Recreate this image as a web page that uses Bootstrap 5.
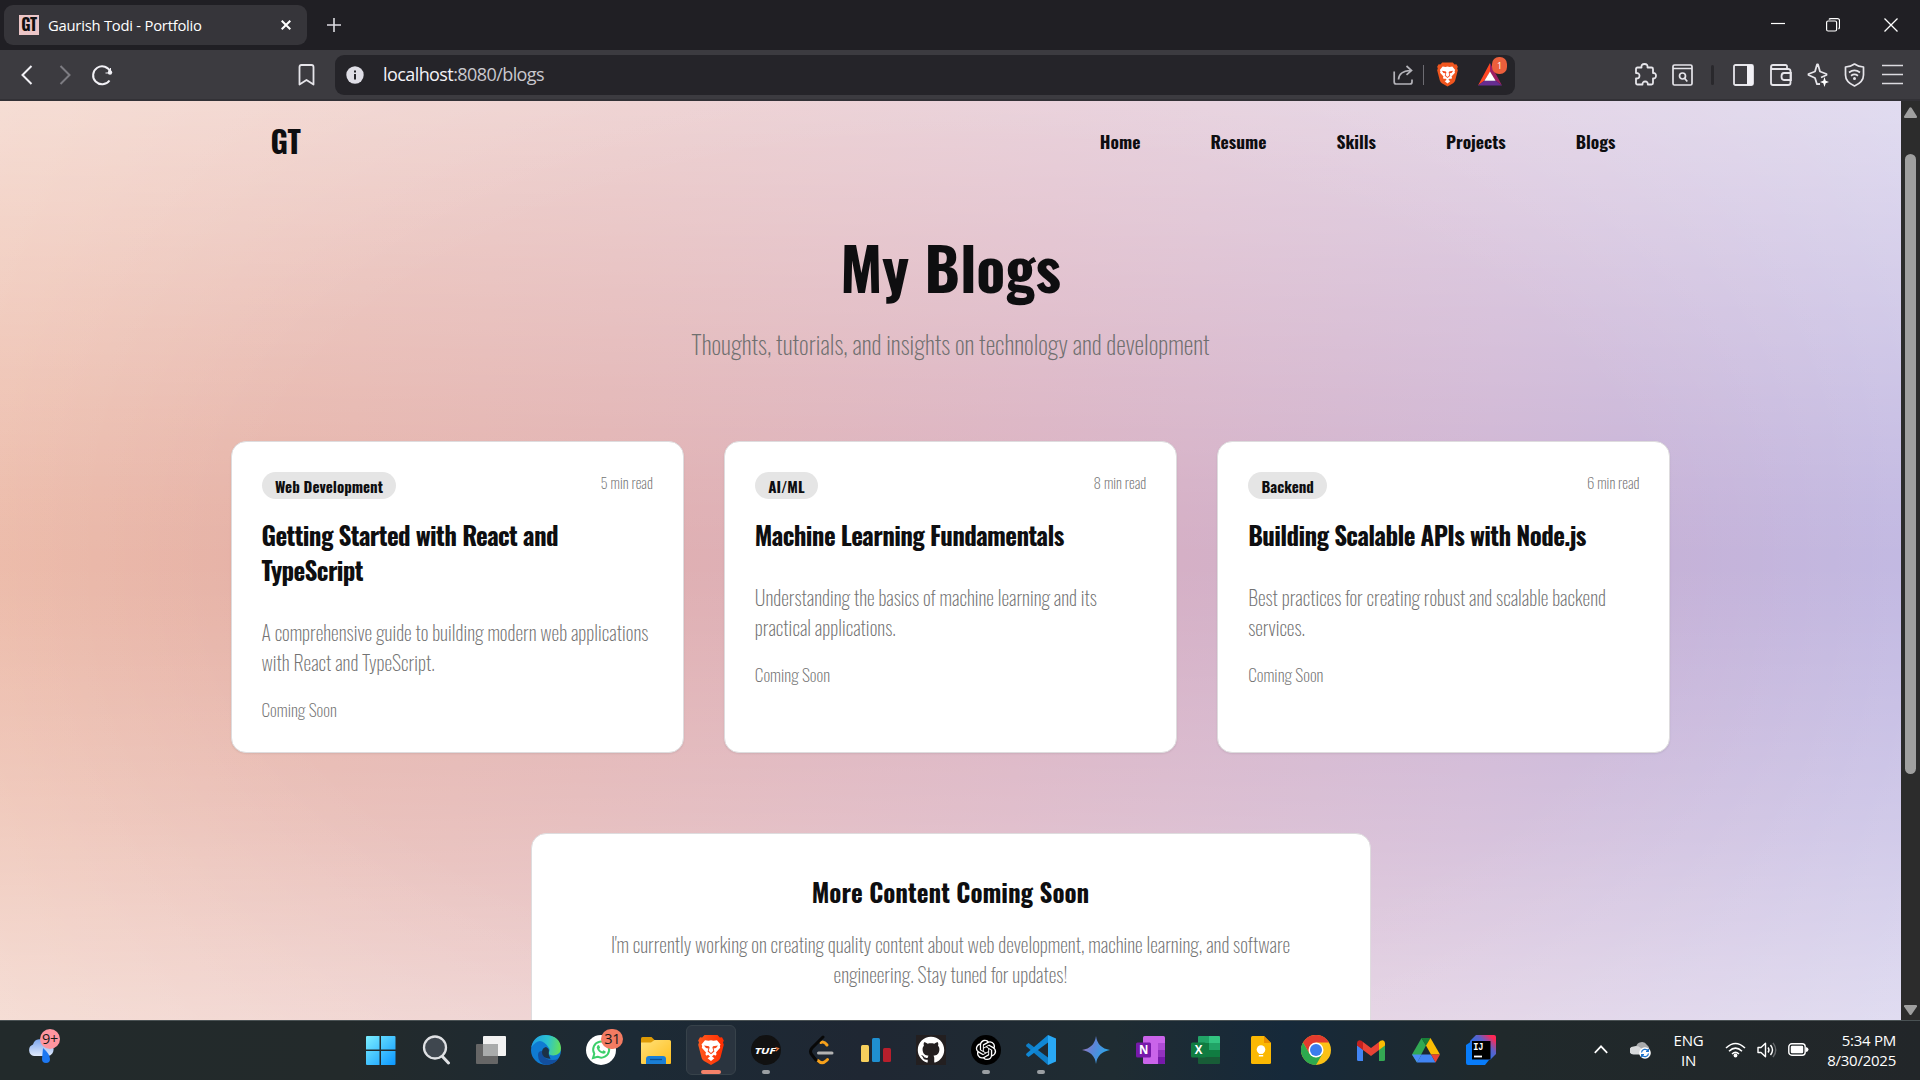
<!DOCTYPE html>
<html lang="en">
<head>
<meta charset="utf-8">
<title>Gaurish Todi - Portfolio</title>
<meta name="viewport" content="width=device-width, initial-scale=1">
<link href="https://cdn.jsdelivr.net/npm/bootstrap@5.3.0/dist/css/bootstrap.min.css" rel="stylesheet">
<style>
  html, body { height: 100%; }
  body { width: 1920px; height: 1080px; overflow: hidden; font-family: "Open Sans", "Noto Sans", sans-serif; background: #201f24; color: #fff; }
  svg { display: block; flex: none; }
  .cell { display: flex; align-items: center; justify-content: center; flex: none; }
  .w23 { width: 23px; } .w24 { width: 24px; } .w36 { width: 36px; } .w37 { width: 37px; } .w38 { width: 38px; } .w40 { width: 40px; } .w53 { width: 53px; } .w56 { width: 56px; } .w58 { width: 58px; }

  /* browser window */
  .tabstrip { height: 50px; background: #201f24; }
  .tab-item { width: 303px; height: 40px; margin: 5px 0 0 4px; padding: 0 12px 0 15px; border-radius: 9px; background: #36353a; font-size: 14.8px; letter-spacing: -.24px; }
  .tab-title { margin-left: 9px; }
  .favicon { width: 20px; height: 20px; background: #ecc6c8; color: #111; font: 700 16px/19px Oswald, "Roboto Condensed", sans-serif; text-align: center; }
  .toolbar { height: 51px; background: #3c3b40; border-bottom: 2px solid #323136; padding: 0 9px 0 8px; }
  .bookmark-cell { margin-left: 168px; }
  .address { width: 1180px; height: 40px; margin-left: 11px; border-radius: 9px; background: #252429; font-size: 18px; letter-spacing: -.58px; color: #c9c8ce; padding-right: 5px; }
  .address b { font-weight: 400; color: #f3f2f7; }
  .vline { width: 1px; height: 20px; background: #6d6c72; }
  .vline-dark { width: 3px; height: 20px; border-radius: 2px; background: #29282c; }
  .bat-badge { position: absolute; left: 22px; top: -6px; width: 15px; height: 17px; border-radius: 7px; background: #ec5f3c; font-size: 9px; line-height: 17px; text-align: center; color: #fff; letter-spacing: 0; }

  /* page viewport */
  .viewport { height: 919px; }
  .page { width: 1901px; height: 919px; overflow: hidden; color: #0e0e10; font-family: Oswald, "Roboto Condensed", sans-serif;
    background:
      radial-gradient(ellipse 62% 75% at 50% 50%, rgba(255,255,255,0) 60%, rgba(255,255,255,.28) 120%),
      linear-gradient(180deg, rgba(255,255,255,.43), rgba(255,255,255,.23) 22%, rgba(255,255,255,.03) 44%, rgba(255,255,255,0) 50%, rgba(255,255,255,.03) 56%, rgba(255,255,255,.2) 78%, rgba(255,255,255,.43)),
      linear-gradient(94deg, #ebb5a1 0%, #e1b0b0 32%, #d9afc0 54%, #cdb2d2 77%, #bbb2e0 100%); }
  .page > * { flex: none; }
  .site-nav { height: 80px; width: 1360px; padding-right: 15px; }
  .logo { font-size: 30px; font-weight: 700; line-height: 40px; }
  .menu { gap: 70px; font-size: 17.5px; font-weight: 700; line-height: 25px; }
  .hero-title { margin: 55px 0 0; font-size: 60px; font-weight: 700; line-height: 59px; }
  .hero-sub { margin: 31px 0 0; font-size: 25px; font-weight: 200; line-height: 35px; color: #6f6f6f; }
  .posts { width: 1440px; gap: 40px; margin-top: 80px; }
  .post { flex: 1 1 0; min-width: 0; border: 1px solid #dedcde; border-radius: 15px; background: #fff; padding: 30px; box-shadow: 0 1px 2px rgba(0,0,0,.08); color: #0e0e10; height: 312px; }
  .tag { background: #e5e5e5; border-radius: 14px; height: 27px; padding: 0 13.4px; font-size: 15px; font-weight: 700; line-height: 28px; }
  .read { font-size: 15px; font-weight: 200; line-height: 21px; color: #737373; }
  .post h2, .more h2 { font-size: 25px; line-height: 35px; font-weight: 700; margin: 18px 0 0; }
  .post h2 { letter-spacing: -.625px; }
  .post p, .more p { font-size: 20px; font-weight: 200; line-height: 30px; color: #737373; margin: 30px 0 0; }
  .post .soon { font-size: 17.5px; line-height: 25px; margin-top: 20px; }
  .more { width: 840px; height: 300px; margin-top: 80px; border: 1px solid #dedcde; border-radius: 15px; background: #fff; padding: 40px 60px; }
  .more h2 { margin: 0; } .more p { margin-top: 20px; }
  .scroller { width: 19px; height: 919px; background: #2c2c2c; padding: 6px 0 5px; }
  .thumb { width: 11px; height: 620px; margin-top: 36px; border-radius: 6px; background: #9f9f9f; }

  /* taskbar */
  .taskbar { height: 60px; border-top: 1px solid #4a5254; background: linear-gradient(90deg, #222a2b 0, #232a2b 18%, #1c2a35 33%, #1f2733 45%, #1f2c32 58%, #16293a 67%, #20292b 78%, #222629 100%); font-size: 15px; line-height: 20px; letter-spacing: -.25px; }
  .pinned { margin-left: 271px; }
  .tray { padding: 0 24px 2px 0; }
  .clock { width: 77.5px; white-space: nowrap; }
  .task { width: 55.05px; height: 59px; padding-bottom: 1px; display: flex; align-items: center; justify-content: center; position: relative; flex: none; }
  .task.open::after { content: ""; position: absolute; left: 23.5px; bottom: 6px; width: 8px; height: 4px; border-radius: 2px; background: #9a9fa3; }
  .task.active::before { content: ""; position: absolute; left: 2.5px; top: 4px; width: 50px; height: 50px; border: 1px solid #37424a; border-radius: 6px; background: #2a343f; }
  .task.active::after { left: 17.5px; width: 20px; background: #f4826a; }
  .task svg { position: relative; }
  .notif { position: absolute; height: 20px; border-radius: 10px; color: #1a1a1a; font-size: 14.5px; line-height: 20px; text-align: center; }
  .task.weather { width: 82px; }
  .weather .notif { left: 40px; top: 8px; width: 20px; background: #ff95a0; }
  .notif.wa { left: 28px; top: 8px; width: 22px; background: #f37b62; }
</style>
</head>
<body>
<svg width="0" height="0" class="position-absolute">
  <defs>
    <linearGradient id="gWin" x1="0" y1="0" x2="1" y2="1"><stop offset="0" stop-color="#7cefff"/><stop offset="1" stop-color="#0b97ff"/></linearGradient>
    <linearGradient id="gEdgeA" x1="0" y1=".3" x2="1" y2=".4"><stop offset="0" stop-color="#1f9fe4"/><stop offset=".55" stop-color="#2cc3cf"/><stop offset="1" stop-color="#63e05a"/></linearGradient>
    <linearGradient id="gFold" x1="0" y1="0" x2="1" y2="1"><stop offset="0" stop-color="#ffe17a"/><stop offset="1" stop-color="#ffbe1c"/></linearGradient>
    <linearGradient id="gGem" x1="0" y1="0" x2="1" y2=".4"><stop offset="0" stop-color="#b070b0"/><stop offset=".5" stop-color="#5a86d8"/><stop offset="1" stop-color="#2aa6e8"/></linearGradient>
    <linearGradient id="gIj" x1=".2" y1=".8" x2="1" y2="0"><stop offset="0" stop-color="#087cfa"/><stop offset=".55" stop-color="#5f60c8"/><stop offset=".85" stop-color="#fe2857"/></linearGradient>
    <linearGradient id="gCloud" x1="0" y1="0" x2="0" y2="1"><stop offset="0" stop-color="#7fa8ee"/><stop offset="1" stop-color="#dfe9fb"/></linearGradient>
    <linearGradient id="gBrave" x1="0" y1="0" x2="1" y2="0"><stop offset="0" stop-color="#ff5a1f"/><stop offset="1" stop-color="#ff2c00"/></linearGradient>
    <symbol id="lion" viewBox="0 0 26 30">
      <path d="M6.500 0h13l2.300 2.600 2.200-.3 1.800 3.200-.8 2 .8 2.300-3.300 12.600c-.4 1.500-1.300 2.600-2.500 3.500L13 30l-7-4.100c-1.200-.9-2.100-2-2.500-3.500L.2 9.800 1 7.500l-.8-2L2 2.300l2.200.3z"/>
      <path fill="#fff" d="M13 5.200l2.500.6 3.500-.6 3.500 4.200-.7 1.600.4 1.800-4.200 4.800.6 1.700-1.200 1.400-1.500-.9-1.900 1.700 2.400 1.800L13 26l-3.400-2.700 2.400-1.800-1.900-1.700-1.500.9-1.200-1.400.6-1.700-4.200-4.800.4-1.800-.7-1.600L7 5.200l3.500.6z"/>
      <path fill="#f4481d" d="M6 10.500l5 .8.6 1.200-.9 3.300L13 18l2.300-2.200-.9-3.300.6-1.200 5-.8-2 2.600-2.400.3.800 3L13 19.200l-3.400-2.800.8-3-2.400-.3z"/>
    </symbol>
  </defs>
</svg>

<!-- tab strip -->
<header class="tabstrip d-flex">
  <div class="tab-item d-flex align-items-center">
    <span class="favicon">GT</span><span class="tab-title">Gaurish Todi - Portfolio</span>
    <svg class="ms-auto me-1" width="10" height="10" viewBox="0 0 10 10" stroke="#fff" stroke-width="2"><path d="M.7.7l8.600 8.600M9.300.7L.7 9.300"/></svg>
  </div>
  <div class="cell w53"><svg width="14" height="14" stroke="#dddce2" stroke-width="1.600"><path d="M7 0v14M0 7h14"/></svg></div>
  <div class="ms-auto d-flex">
    <div class="cell w53"><svg width="14" height="14" stroke="#fff" stroke-width="1.200"><path d="M0 5.500h14"/></svg></div>
    <div class="cell w58"><svg width="14" height="14" fill="none" stroke="#fff" stroke-width="1.200"><rect x=".6" y="3" width="10" height="10" rx="1.500"/><path d="M3 1.500Q3.200.6 5 .6h6.500q2 0 2 2v6.500q0 1.500-1 1.800"/></svg></div>
    <div class="cell w58"><svg width="14" height="14" stroke="#fff" stroke-width="1.300"><path d="M.5.500l13 13M13.500.500l-13 13"/></svg></div>
  </div>
</header>

<!-- toolbar -->
<div class="toolbar d-flex align-items-center">
  <div class="cell w38"><svg width="12" height="20" fill="none" stroke="#f2f1f6" stroke-width="2"><path d="M10.500 1L1.500 10l9 9"/></svg></div>
  <div class="cell w38"><svg width="12" height="20" fill="none" stroke="#7d7c82" stroke-width="2"><path d="M1.500 1l9 9-9 9"/></svg></div>
  <div class="cell w36"><svg width="23" height="22" fill="none" stroke="#f2f1f6" stroke-width="2"><path d="M18.500 16.500A9 9 0 1 1 19.500 8"/><circle cx="19" cy="8.500" r="2.200" fill="#f2f1f6" stroke="none"/><path d="M19.500 4v5h-5" stroke-width="1"/></svg></div>
  <div class="cell w36 bookmark-cell"><svg width="17" height="22" fill="none" stroke="#e6e5ea" stroke-width="1.800" stroke-linejoin="round"><path d="M1.500 3q0-2 2-2h10q2 0 2 2v17.500L8.500 16l-7 4.500z"/></svg></div>
  <div class="address d-flex align-items-center">
    <div class="cell w40"><svg width="18" height="18"><circle cx="9" cy="9" r="8.700" fill="#dfdee6"/><path d="M9 8v5.500M9 4.500v2" stroke="#252429" stroke-width="2"/></svg></div>
    <div class="ps-2"><b>localhost</b>:8080/blogs</div>
    <div class="ms-auto d-flex align-items-center">
      <div class="cell w40"><svg width="21" height="20" fill="none" stroke="#b4b3b9" stroke-width="1.700"><path d="M1.200 6.500V17q0 2 2 2H17q2 0 2-2v-2.500M5.500 14.500Q6 6 17.500 5.500M13.500 1l5 4.500-5 4.300"/></svg></div>
      <div class="vline"></div>
      <div class="cell w38 ms-1 me-1"><svg width="21" height="25" fill="#f0561f"><use href="#lion" width="21" height="25"/></svg></div>
      <div class="cell w40 position-relative"><svg width="24" height="23"><path fill="#ff4724" d="M12 0v9L6.500 17.500 0 22.500z"/><path fill="#9e1f63" d="M12 0v9l5.500 8.500 6.500 5z"/><path fill="#662d91" d="M0 22.500l6.500-5h11l6.500 5z"/><path fill="#fff" d="M12 8.500l5.600 9.300H6.400z"/></svg><span class="bat-badge">1</span></div>
    </div>
  </div>
  <div class="ms-auto d-flex align-items-center">
    <div class="cell w38"><svg width="23" height="23" fill="none" stroke="#e6e5ea" stroke-width="1.800" stroke-linejoin="round"><path d="M2 6q0-1.500 1.500-1.500h4Q7 1 10.500 1T13.500 4.500h4q1.500 0 1.500 1.500v4q3-.2 3 2.700T19 15.500V20q0 1.500-1.500 1.500h-3.700q.2-3-2.600-3t-2.700 3h-5Q2 21.500 2 20v-4.500q3.500.2 3.500-2.700T2 10z"/></svg></div>
    <div class="cell w37"><svg width="21" height="22" fill="none" stroke="#e6e5ea" stroke-width="1.700"><rect x="1" y="1" width="19" height="20" rx="1.500"/><path d="M1 4.500h19M12.800 14.500l2.500 3"/><circle cx="10.500" cy="12" r="3"/></svg></div>
    <div class="cell w23"><div class="vline-dark"></div></div>
    <div class="cell w38"><svg width="21" height="22"><rect x="1" y="1" width="19" height="20" rx="1.500" fill="none" stroke="#e6e5ea" stroke-width="1.800"/><path fill="#f2f1f6" d="M14 1h6v20h-6z"/></svg></div>
    <div class="cell w37"><svg width="22" height="22" fill="none" stroke="#e6e5ea" stroke-width="1.800"><path d="M17 5V2.500Q17 1 15.500 1H3Q1 1 1 3v16q0 2 2 2h15q2.500 0 2.500-2V7q0-2-2.500-2H3Q1 5 1 3M21 9h-7q-2.500 0-2.500 3.500t2.500 3.500h7z"/></svg></div>
    <div class="cell w37"><svg width="22" height="24" fill="none" stroke="#e6e5ea" stroke-width="1.800" stroke-linejoin="round"><path d="M13 21l-3 .2-2-6.200-6.500-3V11l6.500-2.500L10 1.500h1l2 7 6.500 2.500v1l-5.500 2.500"/><path fill="#fff" stroke="none" d="M17.500 14l1.200 3.800 3.300 1.200-3.300 1.200-1.200 3.800-1.200-3.800-3.300-1.200 3.300-1.200z"/></svg></div>
    <div class="cell w37"><svg width="21" height="24" fill="none" stroke="#e6e5ea" stroke-width="1.700" stroke-linejoin="round"><path d="M10.500 1Q14 3.500 19.500 4v8q0 7-9 11-9-4-9-11V4Q7 3.500 10.500 1z"/><path d="M5 9.500q5.500-4.200 11 0M7 12.700q3.500-2.600 7 0"/><circle cx="10.500" cy="15.500" r="1.500" fill="#e6e5ea" stroke="none"/></svg></div>
    <div class="cell w38"><svg width="21" height="21" stroke="#dcdbe0" stroke-width="1.700"><path d="M0 1.500h21M0 10.500h21M0 19.500h21"/></svg></div>
  </div>
</div>

<!-- portfolio page -->
<div class="viewport d-flex">
  <main class="page d-flex flex-column align-items-center">
    <nav class="site-nav d-flex align-items-center justify-content-between">
      <div class="logo">GT</div>
      <div class="menu d-flex"><span>Home</span><span>Resume</span><span>Skills</span><span>Projects</span><span>Blogs</span></div>
    </nav>
    <h1 class="hero-title">My Blogs</h1>
    <p class="hero-sub">Thoughts, tutorials, and insights on technology and development</p>
    <section class="posts d-flex">
      <article class="post">
        <div class="d-flex justify-content-between align-items-start"><span class="tag">Web Development</span><span class="read">5 min read</span></div>
        <h2>Getting Started with React and<br>TypeScript</h2>
        <p class="text-nowrap">A comprehensive guide to building modern web applications<br>with React and TypeScript.</p>
        <p class="soon">Coming Soon</p>
      </article>
      <article class="post">
        <div class="d-flex justify-content-between align-items-start"><span class="tag">AI/ML</span><span class="read">8 min read</span></div>
        <h2>Machine Learning Fundamentals</h2>
        <p class="text-nowrap">Understanding the basics of machine learning and its<br>practical applications.</p>
        <p class="soon">Coming Soon</p>
      </article>
      <article class="post">
        <div class="d-flex justify-content-between align-items-start"><span class="tag">Backend</span><span class="read">6 min read</span></div>
        <h2>Building Scalable APIs with Node.js</h2>
        <p class="text-nowrap">Best practices for creating robust and scalable backend<br>services.</p>
        <p class="soon">Coming Soon</p>
      </article>
    </section>
    <section class="more text-center">
      <h2>More Content Coming Soon</h2>
      <p class="text-nowrap">I'm currently working on creating quality content about web development, machine learning, and software<br>engineering. Stay tuned for updates!</p>
    </section>
  </main>
  <aside class="scroller d-flex flex-column align-items-center">
    <svg width="13" height="11" fill="#9f9f9f"><path d="M5.500.800q1-1.200 2 0L13 9.500q.2 1.500-1 1.500H1Q-.2 11 0 9.500z"/></svg>
    <div class="thumb"></div>
    <svg class="mt-auto" width="13" height="10" fill="#9f9f9f"><path d="M5.500 9.500q1 1 2 0L13 1.500Q13.200 0 12 0H1Q-.2 0 0 1.500z"/></svg>
  </aside>
</div>

<!-- taskbar -->
<footer class="taskbar d-flex align-items-center">
  <div class="task weather">
    <svg width="26" height="28" viewBox="0 0 26 28"><path fill="url(#gCloud)" d="M6 20a6 6 0 0 1-1-11.500A7 7 0 0 1 18 7a6.500 6.500 0 0 1 2 13z"/><path fill="#1d78f2" d="M15 12q7 6 7 11a4 4 0 0 1-8 0z"/></svg>
    <span class="notif">9+</span>
  </div>
  <div class="pinned d-flex">
    <div class="task"><svg width="30" height="30"><path fill="url(#gWin)" d="M0 2q0-1 1-1h12.500v13.500H0zM15 1h13.500q1 0 1 1v12.500H15zM0 16h13.500v14H1q-1 0-1-1zM15 16h14.500v13q0 1-1 1H15z"/></svg></div>
    <div class="task"><svg width="30" height="30"><path d="M20 20l7.500 8" stroke="#dfe1e4" stroke-width="3" stroke-linecap="round"/><circle cx="14" cy="12.500" r="11" fill="#3f474f" stroke="#dfe1e4" stroke-width="2.300"/></svg></div>
    <div class="task"><svg width="32" height="30"><rect x="1" y="9" width="22" height="20" rx="1" fill="#666"/><rect x="8" y="1" width="23" height="20" rx="1" fill="#f2f2f2"/><path fill="#a9abab" d="M8 9h15v12H8z"/></svg></div>
    <div class="task"><svg width="30" height="30" viewBox="0 0 30 30"><circle cx="15" cy="15" r="15" fill="#0f7bd2"/><path fill="#134f9e" d="M11 16q1 9 10.500 9 3.500 0 6-1.500-4 6.500-12.500 6.500Q7 28 7 20q0-4 4-4z"/><path fill="url(#gEdgeA)" d="M.3 12.500Q2.500 0 15 0q14 1 15 13 0 7-7.500 7.500-6.500-.5-4.500-3.500 1.500-2.500-.5-4.500Q9-.5.3 12.500z"/><path fill="#1e262f" d="M15 12q-4 1-4 5t4 6q2 1 4.500.8Q17 20.500 17.800 17T15 12z" opacity=".85"/></svg></div>
    <div class="task"><svg width="30" height="30" viewBox="0 0 30 30"><circle cx="15" cy="15" r="15" fill="#fff"/><path d="M7 23l1.300-4.300A8 8 0 1 1 11.500 21.700z" fill="none" stroke="#3ccf6a" stroke-width="2"/><path fill="#3ccf6a" d="M11.500 10.500q1-1 1.700 0l.9 2-.9 1.400q1 1.800 3 2.700l1.300-1.300 2.200 1.100q.3 2.100-2.200 2.300-5.500-.6-6.800-6.200z"/></svg><span class="notif wa">31</span></div>
    <div class="task"><svg width="30" height="27"><path fill="#dd9a06" d="M0 1.500Q0 0 1.500 0h9L14 3.500V8H0z"/><path fill="url(#gFold)" d="M0 5.500h10L13.500 3h15Q30 3 30 4.500V26q0 1-1 1H1q-1 0-1-1z"/><path fill="#1a7fd6" d="M5 27v-5q0-3 3-3h14q3 0 3 3v5z"/><path stroke="#0c4f92" stroke-width="1.300" d="M9 22.500h12"/></svg></div>
    <div class="task open active"><svg width="26" height="30" fill="url(#gBrave)"><use href="#lion" width="26" height="30"/></svg></div>
    <div class="task open"><svg width="30" height="30"><circle cx="15" cy="15" r="15" fill="#111"/><text x="3.500" y="18.500" font-family="Open Sans, sans-serif" font-size="9.500" font-weight="700" font-style="italic" fill="#fff" textLength="21" lengthAdjust="spacingAndGlyphs">TUF</text><path d="M24.500 12.500l3 1-2.500 2.500" stroke="#e8743a" fill="none" stroke-width="1.300"/></svg></div>
    <div class="task"><svg width="26" height="30" fill="none" stroke-width="3" stroke-linecap="round"><path stroke="#f7a11b" d="M10 25.500q4 4.500 8.500 0l1-1M13 7.500q3-1.500 6 2.500"/><path stroke="#080808" d="M15 2L4 13q-3 3.500 0 7l4 5"/><path stroke="#b3b3b3" d="M10.500 18H24"/></svg></div>
    <div class="task"><svg width="30" height="26" viewBox="0 1 30 26"><rect x="0" y="9" width="8" height="17" rx="1.500" fill="#f7cf5c"/><rect x="11" y="2" width="8" height="24" rx="1.500" fill="#1f8fd0"/><rect x="22" y="12" width="8" height="14" rx="1.500" fill="#b81f2c"/></svg></div>
    <div class="task"><svg width="30" height="30"><path fill="#231f20" d="M0 0h30v30H0z"/><path fill="#fff" transform="translate(1.800 1.500) scale(1.100)" d="M12 .297c-6.630 0-12 5.373-12 12 0 5.303 3.438 9.800 8.205 11.385.6.113.82-.258.82-.577 0-.285-.01-1.040-.015-2.040-3.338.724-4.042-1.610-4.042-1.610C4.422 18.070 3.633 17.700 3.633 17.700c-1.087-.744.084-.729.084-.729 1.205.084 1.838 1.236 1.838 1.236 1.070 1.835 2.809 1.305 3.495.998.108-.776.417-1.305.76-1.605-2.665-.3-5.466-1.332-5.466-5.930 0-1.310.465-2.380 1.235-3.220-.135-.303-.54-1.523.105-3.176 0 0 1.005-.322 3.300 1.230.96-.267 1.980-.399 3-.405 1.020.006 2.040.138 3 .405 2.280-1.552 3.285-1.230 3.285-1.230.645 1.653.24 2.873.12 3.176.765.84 1.230 1.910 1.230 3.220 0 4.610-2.805 5.625-5.475 5.920.42.36.81 1.096.81 2.220 0 1.606-.015 2.896-.015 3.286 0 .315.21.69.825.57C20.565 22.092 24 17.592 24 12.297c0-6.627-5.373-12-12-12"/></svg></div>
    <div class="task open"><svg width="30" height="30" viewBox="0 0 30 30"><circle cx="15" cy="15" r="15" fill="#000"/><path fill="#fff" transform="translate(4.800 4.700) scale(.85)" d="M22.282 9.821a5.985 5.985 0 0 0-.516-4.911 6.046 6.046 0 0 0-6.510-2.900A6.065 6.065 0 0 0 4.981 4.182a5.985 5.985 0 0 0-3.998 2.900 6.046 6.046 0 0 0 .743 7.097 5.980 5.980 0 0 0 .511 4.911 6.051 6.051 0 0 0 6.515 2.900A5.985 5.985 0 0 0 13.260 24a6.056 6.056 0 0 0 5.772-4.206 5.989 5.989 0 0 0 3.998-2.900 6.056 6.056 0 0 0-.748-7.073zm-9.022 12.608a4.476 4.476 0 0 1-2.876-1.041l.142-.080 4.778-2.758a.795.795 0 0 0 .393-.681v-6.737l2.020 1.169a.071.071 0 0 1 .038.052v5.583a4.504 4.504 0 0 1-4.495 4.494zm-9.661-4.125a4.471 4.471 0 0 1-.535-3.014l.142.085 4.783 2.758a.771.771 0 0 0 .781 0l5.843-3.369v2.332a.080.080 0 0 1-.033.062L9.740 19.950a4.499 4.499 0 0 1-6.141-1.646zM2.341 7.896a4.485 4.485 0 0 1 2.366-1.973V11.600a.766.766 0 0 0 .388.677l5.814 3.354-2.020 1.169a.076.076 0 0 1-.071 0l-4.830-2.787A4.504 4.504 0 0 1 2.341 7.872zm16.596 3.856L13.104 8.364 15.119 7.200a.076.076 0 0 1 .071 0l4.830 2.791a4.494 4.494 0 0 1-.677 8.104v-5.677a.790.790 0 0 0-.407-.667zm2.011-3.023l-.142-.085-4.774-2.782a.776.776 0 0 0-.785 0L9.409 9.230V6.897a.066.066 0 0 1 .028-.062l4.830-2.787a4.499 4.499 0 0 1 6.680 4.660zM8.307 12.863l-2.020-1.164a.080.080 0 0 1-.038-.057V6.074a4.499 4.499 0 0 1 7.376-3.454l-.142.081L8.704 5.459a.795.795 0 0 0-.393.681zm1.098-2.365l2.602-1.500 2.607 1.500v2.999l-2.597 1.500-2.607-1.500z"/></svg></div>
    <div class="task open"><svg width="30" height="30" viewBox="0 0 30 30"><path fill="#0f7fc9" d="M0 10l2.500-2L22 22.500V30L.5 11.500z"/><path fill="#1088d6" d="M0 20l2.500 2L22 7.500V0L.5 18.500z"/><path fill="#29a8f5" d="M22 0l8 3.500v23L22 30z"/></svg></div>
    <div class="task"><svg width="28" height="28"><path fill="url(#gGem)" d="M14 0q1.500 12 14 14-12.500 2-14 14-1.500-12-14-14 12.500-2 14-14z"/></svg></div>
    <div class="task"><svg width="30" height="28"><rect x="7" width="22" height="28" rx="1.500" fill="#ca64ea"/><path fill="#ae4bd5" d="M22 7h7v7h-7z"/><path fill="#9332bf" d="M22 14h7v7h-7z"/><path fill="#7719aa" d="M22 21h7v6q0 1-1 1h-6z"/><rect y="6.500" width="15" height="15" rx="1.500" fill="#7719aa"/><text x="7.500" y="18.200" text-anchor="middle" font-family="Open Sans, sans-serif" font-size="11.500" font-weight="700" fill="#fff">N</text></svg></div>
    <div class="task"><svg width="30" height="28"><path fill="#21a366" d="M7 1q0-1 1-1h10v7H7z"/><path fill="#33c481" d="M18 0h10q1 0 1 1v6H18z"/><path fill="#107c41" d="M7 7h11v14H7z"/><path fill="#21a366" d="M18 7h11v7H18z"/><path fill="#107c41" d="M18 14h11v7H18z"/><path fill="#185c37" d="M7 21h22v6q0 1-1 1H8q-1 0-1-1z"/><rect y="6.500" width="15" height="15" rx="1.500" fill="#107c41"/><text x="7.500" y="18.200" text-anchor="middle" font-family="Open Sans, sans-serif" font-size="11.500" font-weight="700" fill="#fff">X</text></svg></div>
    <div class="task"><svg width="20" height="28"><path fill="#fbb803" d="M0 1.500Q0 0 1.500 0H13l7 7v19.500q0 1.500-1.500 1.500h-17Q0 28 0 26.500z"/><path fill="#e98d00" d="M13 0l7 7h-7z"/><circle cx="10" cy="13.500" r="4.300" fill="#fff"/><path stroke="#fff" stroke-width="1.500" d="M7.800 17h4.400M7.800 19.700h4.400"/></svg></div>
    <div class="task"><svg width="30" height="30" viewBox="0 0 30 30"><circle cx="15" cy="15" r="15" fill="#fbc116"/><path fill="#e33b2e" d="M2 7.500A15 15 0 0 1 28 7.500H15L8.500 18.800z"/><path fill="#2da94f" d="M2 7.500A15 15 0 0 0 15 30l6.500-11.300L15 22.500 8.500 18.800z"/><circle cx="15" cy="15" r="7.500" fill="#fff"/><circle cx="15" cy="15" r="6" fill="#3b7ded"/></svg></div>
    <div class="task"><svg width="28" height="21"><path fill="#4285f4" d="M0 5l6 4.500V21H1.500Q0 21 0 19.500z"/><path fill="#34a853" d="M22 9.500L28 5v14.500q0 1.500-1.500 1.500H22z"/><path fill="#ea4335" d="M6 2l8 6 8-6v8l-8 6-8-6z"/><path fill="#c5221f" d="M0 3Q.5-1 4.500.7L6 2v8L0 5.500z"/><path fill="#fbbc04" d="M28 3q-.5-4-4.500-2.300L22 2v8l6-4.500z"/></svg></div>
    <div class="task"><svg width="28" height="26"><path fill="#31a853" d="M9.500 1L14 8.500 5 25.500 0 17.500z"/><path fill="#188038" d="M9.500 1h9L14 8.500z"/><path fill="#fbbc04" d="M18.500 1L28 17.500h-9L14 8.500z"/><path fill="#4285f4" d="M9.500 17.500H19L23.500 25.500H5z"/><path fill="#4a8cf5" d="M0 17.500h9.500L5 25.500z"/><path fill="#ea4335" d="M19 17.500h9l-4.500 8z"/></svg></div>
    <div class="task"><svg width="30" height="30" viewBox="0 0 30 30"><path fill="#087cfa" d="M0 10l6-4v17h17v2l-4 5H2q-2 0-2-2z"/><path fill="url(#gIj)" d="M4 6l6-6h18q2 0 2 2v17l-6 6H6z"/><path fill="#000" d="M6 6h18.500v18.500H6z"/><path stroke="#fff" stroke-width="1.800" d="M8 21.500h8"/><text x="7.200" y="14.800" font-family="Liberation Mono, monospace" font-size="10" font-weight="700" fill="#fff" textLength="10" lengthAdjust="spacingAndGlyphs">IJ</text></svg></div>
  </div>
  <div class="tray d-flex align-items-center ms-auto">
    <div class="cell w40"><svg width="14" height="9" fill="none" stroke="#fff" stroke-width="1.700"><path d="M.8 7.800L7 1.300l6.200 6.500"/></svg></div>
    <div class="cell w40"><svg width="21" height="18"><path fill="#a9abad" d="M6 6a6 6 0 0 1 11-2q3 2 2 6L8 13z"/><path fill="#d7d9db" d="M3.500 13.500a4 4 0 0 1 0-8q4-1.500 8 2l3 6z"/><circle cx="15" cy="12" r="5.800" fill="#fff"/><path d="M11.500 11.500a3.600 3.600 0 0 1 6.600-1.500M18.500 12.500a3.600 3.600 0 0 1-6.600 1.500M18.300 8v2.300H16M11.700 16v-2.300H14" fill="none" stroke="#1a72cc" stroke-width="1.300"/></svg></div>
    <div class="cell w56 text-center">ENG<br>IN</div>
    <div class="cell w38"><svg width="21" height="16" fill="none" stroke="#fff" stroke-width="1.500"><path d="M1 6q9.500-9 19 0M4 9.300q6.500-6.300 13 0M7 12q3.500-3.200 7 0"/><circle cx="10.500" cy="13.500" r="1.900" fill="#fff" stroke="none"/></svg></div>
    <div class="cell w24"><svg width="20" height="16" fill="none" stroke="#fff" stroke-width="1.400" stroke-linejoin="round"><path d="M1 5.500h3L8.500 1.300v13.400L4 10.500H1zM11 5.500q2 2.500 0 5M13.500 3q4 5 0 10"/><path stroke="#66696c" d="M16 .8q5.500 7.200 0 14.400"/></svg></div>
    <div class="cell w40"><svg width="21" height="13"><rect x=".8" y=".8" width="16.400" height="11.400" rx="3" fill="none" stroke="#fff" stroke-width="1.400"/><rect x="2.800" y="2.800" width="12.400" height="7.400" rx="1.200" fill="#fff"/><path fill="#fff" d="M18 4q2.500.5 2.500 2.500T18 9z"/></svg></div>
    <div class="clock text-end">5:34 PM<br>8/30/2025</div>
  </div>
</footer>
<script src="https://cdn.jsdelivr.net/npm/bootstrap@5.3.0/dist/js/bootstrap.bundle.min.js"></script>
</body>
</html>
